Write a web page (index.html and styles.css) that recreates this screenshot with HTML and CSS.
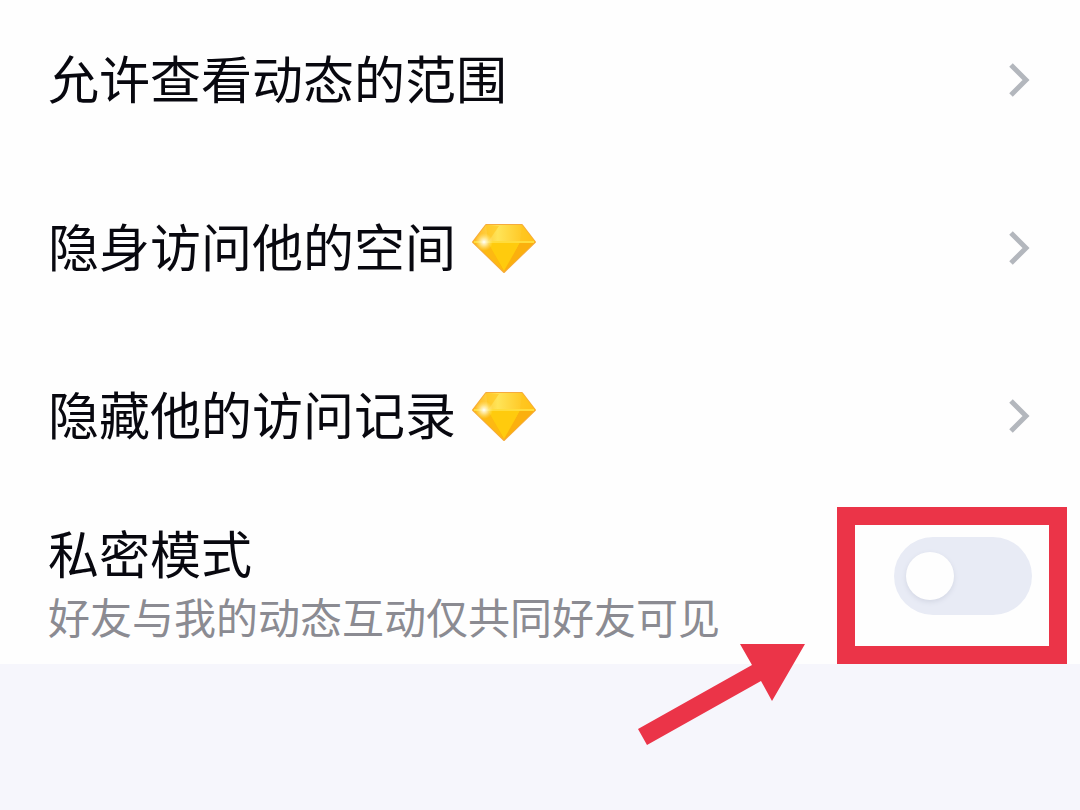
FILE: index.html
```
<!DOCTYPE html>
<html lang="zh-CN">

<head>
    <title>权限设置</title>
    <meta charset="UTF-8">
    <meta name="viewport" content="width=device-width, initial-scale=1.0">
    <link rel="stylesheet" href="styles.css">
</head>

<body>
    <!-- shared icons -->
    <svg class="sprite" aria-hidden="true">
        <defs>
            <linearGradient id="gem_face" x1="0" y1="0" x2="0" y2="1">
                <stop offset="0" stop-color="#ffd21c" />
                <stop offset="0.5" stop-color="#ffc90c" />
                <stop offset="1" stop-color="#fba60c" />
            </linearGradient>
            <linearGradient id="gem_top" x1="0" y1="0" x2="1" y2="0">
                <stop offset="0" stop-color="#ffb41c" />
                <stop offset="0.4" stop-color="#ffe458" />
                <stop offset="1" stop-color="#ffba0c" />
            </linearGradient>
            <radialGradient id="gem_glint">
                <stop offset="0" stop-color="#ffffff" />
                <stop offset="0.4" stop-color="#fff6c0" stop-opacity="0.7" />
                <stop offset="1" stop-color="#ffe978" stop-opacity="0" />
            </radialGradient>
        </defs>
        <symbol id="gem" viewBox="0 0 66 54">
            <path d="M15 4H51L64 21L33 51L2 21Z" fill="url(#gem_face)" stroke="#f6ab3c" stroke-width="2" stroke-linejoin="round" />
            <path d="M15 4H51L64 21H2Z" fill="url(#gem_top)" />
            <path d="M2 21H17L33 51Z" fill="#fdb912" />
            <path d="M49 21H64L33 51Z" fill="#fbb00e" />
            <path d="M17 21H49L33 50Z" fill="#ffcb0d" />
            <path d="M15 4L17 21L28 5ZM51 4L49 21L64 21Z" fill="#ffc51c" opacity="0.6" />
            <path d="M3 21H63" stroke="#ffdc3c" stroke-width="2" />
            <circle cx="13" cy="21" r="9" fill="url(#gem_glint)" />
        </symbol>
        <symbol id="chevron" viewBox="0 0 24 36">
            <path d="M3 3L18 18L3 33" fill="none" stroke="#b3b7bd" stroke-width="5" />
        </symbol>
    </svg>

    <main class="settings">
        <a class="row" href="#scope">
            <span class="title">允许查看动态的范围</span>
            <svg class="chevron" aria-hidden="true"><use href="#chevron" /></svg>
        </a>
        <a class="row" href="#invisible">
            <span class="title">隐身访问他的空间</span>
            <svg class="gem" aria-hidden="true"><use href="#gem" /></svg>
            <svg class="chevron" aria-hidden="true"><use href="#chevron" /></svg>
        </a>
        <a class="row" href="#records">
            <span class="title">隐藏他的访问记录</span>
            <svg class="gem" aria-hidden="true"><use href="#gem" /></svg>
            <svg class="chevron" aria-hidden="true"><use href="#chevron" /></svg>
        </a>
        <div class="row private">
            <label class="text" for="private_mode">
                <span class="title">私密模式</span>
                <span class="hint">好友与我的动态互动仅共同好友可见</span>
            </label>
            <div class="control">
                <input class="switch" id="private_mode" type="checkbox" role="switch">
                <div class="frame"></div>
                <svg class="arrow" viewBox="0 0 172 108" aria-hidden="true">
                    <path d="M104 4H169L136 61L125 41L11 105L2 89L116 25Z" fill="#eb3448" />
                </svg>
            </div>
        </div>
    </main>
</body>

</html>
```

FILE: styles.css
```
body {
    margin: 0;
    min-height: 100vh;
    background: #f6f6fc;
    font-family: "Noto Sans CJK SC", sans-serif;
}

.sprite {
    position: absolute;
    width: 0;
    height: 0;
}

.settings {
    display: flex;
    flex-direction: column;
    gap: 96px;
    padding: 44px 48px 16px;
    background: #fefefe;
}

.row {
    display: flex;
    align-items: center;
    color: #08080f;
    text-decoration: none;
}

.title {
    padding-bottom: 6px;
    font-size: 51px;
    line-height: 66px;
}

.gem {
    width: 66px;
    height: 54px;
    margin-left: 15px;
}

.chevron {
    width: 24px;
    height: 36px;
    margin-left: auto;
}

.private {
    align-items: flex-start;
    justify-content: space-between;
    margin-top: -29px;
}

.text {
    display: flex;
    flex-direction: column;
}

.hint {
    padding-bottom: 7px;
    font-size: 42px;
    line-height: 50px;
    color: #8b8b92;
}

.control {
    position: relative;
    margin-top: 18px;
}

.switch {
    display: flex;
    align-items: center;
    appearance: none;
    width: 138px;
    height: 78px;
    margin: 0;
    padding: 0 12px;
    box-sizing: border-box;
    border-radius: 39px;
    background: #e8ebf5;
}

.switch::before {
    content: "";
    width: 48px;
    height: 48px;
    border-radius: 50%;
    background: #fefefe;
    box-shadow: 0 2px 5px #d3d7e4;
}

.switch:checked {
    justify-content: flex-end;
    background: #12b7f5;
}

/* callout around the switch */
.frame {
    position: absolute;
    top: -30px;
    right: -35px;
    bottom: -49px;
    left: -57px;
    border: 18px solid #eb3448;
    pointer-events: none;
}

.arrow {
    position: absolute;
    top: 103px;
    right: 224px;
    width: 172px;
    height: 108px;
    pointer-events: none;
}
```
